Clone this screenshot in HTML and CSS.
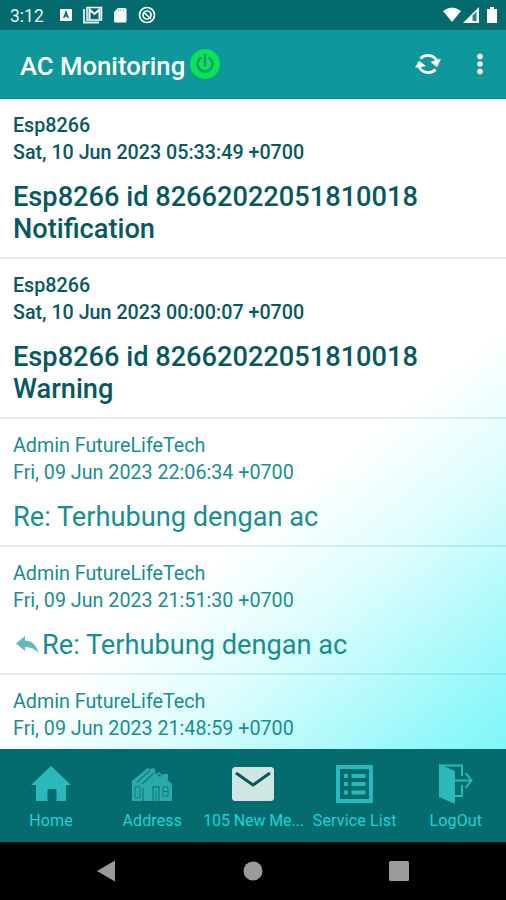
FILE: index.html
```html
<!DOCTYPE html>
<html lang="en">
  <head>
    <meta charset="UTF-8" />
    <meta name="viewport" content="width=device-width, initial-scale=1.0" />
    <title>AC Monitoring</title>
    <link rel="stylesheet" href="styles.css">
  </head>
  <body>
    <div class="status">
      <span class="time">3:12</span>
      <svg class="status-left" width="100" height="20" viewBox="0 0 100 20">
        <rect x="1" y="4" width="12" height="12" rx="1" fill="#fff" />
        <path d="M4.700 13 7 7l2.300 6M5.500 11h3" fill="none" stroke="#036b6d" stroke-width="1.400" />
        <path d="M25 4v13.500h15" fill="none" stroke="#e4f1f1" stroke-width="1.800" />
        <path d="M28 2.500h14.500v12.500H28z" fill="none" stroke="#fff" stroke-width="1.500" />
        <path d="M30.500 14V4.500l5 4.500 5-4.500V14" fill="none" stroke="#fff" stroke-width="2" />
        <path d="M59 3h7q1.500 0 1.500 1.500v11.500q0 1.500-1.500 1.500h-9.500q-1.500 0-1.500-1.500V7z" fill="#fff" />
        <path d="M59.500 4v2.500M62 4v2.500M64.500 4v2.500" stroke="#8fbfc0" stroke-width="1" />
        <circle cx="88" cy="10" r="7.500" fill="none" stroke="#fff" stroke-width="1.700" />
        <circle cx="88" cy="10" r="4" fill="none" stroke="#fff" stroke-width="1.700" />
        <path d="m85 7.500 7 6.500" stroke="#fff" stroke-width="1.700" />
      </svg>
      <svg class="status-right" width="56" height="20" viewBox="0 0 56 20">
        <path d="M0 6q9-7 18 0l-9 11z" fill="#fff" />
        <path d="M20 18 36 2v16z" fill="#fff" />
        <path d="M29.500 16v-5.500l4-4V16z" fill="#298284" />
        <path d="M44 4h3V2h4v2h3v14H44z" fill="#fff" />
      </svg>
    </div>

    <header class="toolbar">
      <h1>AC Monitoring</h1>
      <svg class="power" width="30" height="30" viewBox="0 0 30 30">
        <circle cx="15" cy="15" r="15" fill="#06e552" />
        <path d="M10.500 9a7.500 7.500 0 1 0 9 0M15 6v10" fill="none" stroke="#0a9573" stroke-width="2.600" stroke-linecap="round" />
      </svg>
      <svg class="refresh" width="26" height="24" viewBox="0 0 26 24">
        <path d="M5.500 6.500A9.500 8.500 0 0 1 22 10M20.500 17.500A9.500 8.500 0 0 1 4 14" fill="none" stroke="#fff" stroke-width="2.800" />
        <path d="M16 10 25.500 7 22 15zM.5 15.500 4 9l6.500 5z" fill="#fff" stroke="#fff" stroke-width=".5" />
      </svg>
      <svg class="more" width="6" height="22" viewBox="0 0 6 22">
        <g fill="#fff"><circle cx="3" cy="3.500" r="2.800" /><circle cx="3" cy="11" r="2.800" /><circle cx="3" cy="18.500" r="2.800" /></g>
      </svg>
    </header>

    <main class="messages">
      <article class="message unread">
        <p class="from">Esp8266</p>
        <p class="date">Sat, 10 Jun 2023 05:33:49 +0700</p>
        <h2>Esp8266 id 82662022051810018<br>Notification</h2>
      </article>
      <article class="message unread">
        <p class="from">Esp8266</p>
        <p class="date">Sat, 10 Jun 2023 00:00:07 +0700</p>
        <h2>Esp8266 id 82662022051810018<br>Warning</h2>
      </article>
      <article class="message">
        <p class="from">Admin FutureLifeTech</p>
        <p class="date">Fri, 09 Jun 2023 22:06:34 +0700</p>
        <h2>Re: Terhubung dengan ac</h2>
      </article>
      <article class="message">
        <p class="from">Admin FutureLifeTech</p>
        <p class="date">Fri, 09 Jun 2023 21:51:30 +0700</p>
        <h2>
          <svg class="reply" width="29" height="20" viewBox="0 0 29 20">
            <path d="M3 8.500 12 1v4.500q10 0 13.500 12.500-5-6-13.500-6v4z" fill="#63b9bb" />
          </svg>Re: Terhubung dengan ac
        </h2>
      </article>
      <article class="message">
        <p class="from">Admin FutureLifeTech</p>
        <p class="date">Fri, 09 Jun 2023 21:48:59 +0700</p>
      </article>
    </main>

    <nav class="tabs">
      <a class="tab">
        <svg width="42" height="42" viewBox="0 0 42 42">
          <path d="M21 2 41 21h-5v16h-9.500V25h-9v12H6V21H1z" fill="#2ab8bb" />
        </svg>
        <span>Home</span>
      </a>
      <a class="tab">
        <svg width="42" height="42" viewBox="0 0 42 42">
          <path d="M1 17 16 4.500h2l2 1.500V4.500h4V9l5 4 4-3h4v7l4 5v15H1z" fill="#2ba9ac" />
          <path d="M6 18 19 6.500M11 20 23 9M12 24v13M22 37V23h6v14" fill="none" stroke="#0d7f81" stroke-width="1.300" />
          <path d="M4 23h5v11H4zM32 23h5v9h-5zM32 27.500h5M25 37V26" fill="none" stroke="#0d7f81" stroke-width="1" />
          <path d="M12 22 28 9l13 12" fill="none" stroke="#2ba9ac" stroke-width="1.500" />
        </svg>
        <span>Address</span>
      </a>
      <a class="tab active">
        <svg width="42" height="42" viewBox="0 0 42 42">
          <rect x="0" y="3" width="42" height="34" rx="3.500" fill="#d0e6e4" />
          <path d="m4 9 17 12L38 9" fill="none" stroke="#05595c" stroke-width="3" />
        </svg>
        <span>105 New Me...</span>
      </a>
      <a class="tab">
        <svg width="42" height="42" viewBox="0 0 42 42">
          <rect x="4" y="3" width="33" height="34" fill="none" stroke="#2ab8bb" stroke-width="4" />
          <path d="M10 12h4M10 20h4M10 28.500h4M17.500 12h14M17.500 20h14M17.500 28.500h14" stroke="#2ab8bb" stroke-width="4.200" />
        </svg>
        <span>Service List</span>
      </a>
      <a class="tab">
        <svg width="42" height="42" viewBox="0 0 42 42">
          <path d="M4 0 20 7v33L4 33z" fill="#2ab8bb" />
          <path d="M5 1.500h22V12M27 21v11h-7M20 16.500h16M30.500 9l6 7.500-6 7.500" fill="none" stroke="#2ab8bb" stroke-width="2" />
        </svg>
        <span>LogOut</span>
      </a>
    </nav>

    <div class="navbar">
      <svg width="20" height="22" viewBox="0 0 20 22"><path d="M1 11 19 .5v21z" fill="#9b9b9b" /></svg>
      <svg width="20" height="22" viewBox="0 0 20 22"><circle cx="10" cy="11" r="9.500" fill="#9b9b9b" /></svg>
      <svg width="20" height="22" viewBox="0 0 20 22"><rect x="0" y="1" width="20" height="20" rx="1.500" fill="#9b9b9b" /></svg>
    </div>
  </body>
</html>
```
FILE: styles.css
```css
* {
  margin: 0;
  padding: 0;
  box-sizing: border-box;
}
body {
  width: 506px;
  height: 900px;
  display: flex;
  flex-direction: column;
  overflow: hidden;
  font-family: Roboto, sans-serif;
  background: #000;
}
svg {
  display: block;
  flex: none;
}
.status {
  height: 30px;
  flex: none;
  display: flex;
  align-items: center;
  padding: 0 7px 0 10px;
  background: #036b6d;
  color: #e4f1f1;
}
.time {
  width: 49px;
  font-size: 17.5px;
  line-height: 30px;
  padding-top: 2px;
}
.status-right {
  margin-left: auto;
}
.toolbar {
  height: 69px;
  flex: none;
  display: flex;
  align-items: center;
  padding: 0 23px 0 20px;
  background: #10979c;
  border-bottom: 1px solid #0b8a8f;
  color: #fff;
}
.toolbar h1 {
  width: 170px;
  font-size: 25.7px;
  font-weight: 500;
  line-height: 30px;
  padding-top: 3px;
  white-space: nowrap;
}
.refresh {
  margin-left: auto;
  margin-right: 36px;
}
.messages {
  height: 650px;
  flex: none;
  overflow: hidden;
  background: linear-gradient(141deg, #fff 60%, #dffdfd 73%, #b6fafb 84%, #98f8fa 92%, #7df6f8 100%);
}
.message {
  padding: 13px 13px 0;
  height: 128px;
  border-bottom: 2px solid rgba(0, 60, 60, 0.09);
  color: #168e92;
}
.message p {
  font-size: 19.7px;
  line-height: 27px;
}
.message h2 {
  display: flex;
  align-items: center;
  padding-top: 15px;
  font-size: 27.2px;
  font-weight: 400;
  line-height: 32px;
}
.unread {
  height: 160px;
  color: #07595d;
}
.unread p {
  font-weight: 500;
}
.unread h2 {
  display: block;
  font-weight: 500;
}
.tabs {
  height: 93px;
  flex: none;
  display: grid;
  grid-template-columns: repeat(5, minmax(0, 1fr));
  background: #046c6f;
}
.tab {
  display: flex;
  flex-direction: column;
  align-items: center;
  padding: 15px 0 0 1px;
  color: #1fd3d3;
  font-size: 16px;
  line-height: 20px;
  letter-spacing: 0.15px;
  white-space: nowrap;
}
.tab span {
  margin-top: 5px;
}
.active span {
  letter-spacing: -0.1px;
}
.navbar {
  flex: 1;
  display: flex;
  justify-content: space-between;
  align-items: center;
  padding: 0 97px 0 96px;
}
```
